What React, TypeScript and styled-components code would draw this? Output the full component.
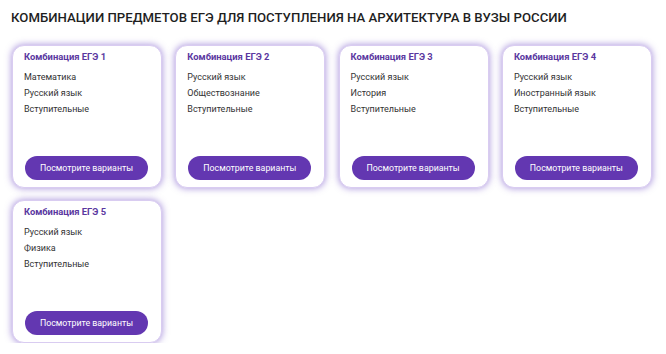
import React from "react";
import styled, { createGlobalStyle } from "styled-components";

const Global = createGlobalStyle`
  html, body { margin: 0; padding: 0; background: #ffffff; }
  body { font-family: Roboto, "Noto Sans", Arial, sans-serif; }
`;

const Page = styled.div`
  padding: 9px 14px 0 12px;
`;

const Heading = styled.h1`
  margin: 0 0 0 -1px;
  font-size: 13.2px;
  line-height: 18px;
  font-weight: 500;
  color: #1f1f1f;
  text-transform: uppercase;
  white-space: nowrap;
`;

const Grid = styled.div`
  display: grid;
  grid-template-columns: repeat(4, 150px);
  column-gap: 13.3px;
  row-gap: 12px;
  margin-top: 18px;
`;

const Card = styled.div`
  box-sizing: border-box;
  height: 143px;
  border-radius: 12px;
  background: #ffffff;
  border: 1px solid #d9ccf1;
  box-shadow: 0 0 6px 1px rgba(112, 76, 198, 0.5);
  padding: 4px 11px 7px 11px;
  display: flex;
  flex-direction: column;
`;

const CardTitle = styled.div`
  font-size: 9.4px;
  line-height: 14px;
  font-weight: 700;
  color: #5a379f;
`;

const List = styled.ul`
  list-style: none;
  margin: 5px 0 0 0;
  padding: 0;
`;

const Item = styled.li`
  font-size: 9px;
  line-height: 16px;
  color: #333333;
`;

const Button = styled.button`
  margin-top: auto;
  margin-left: 1px;
  width: 123px;
  height: 24px;
  border: none;
  border-radius: 12px;
  background: #6337b1;
  color: #ffffff;
  font-family: Roboto, "Noto Sans", Arial, sans-serif;
  font-size: 8.8px;
  font-weight: 400;
  padding: 0;
  cursor: pointer;
`;

const combos = [
  ["Математика", "Русский язык", "Вступительные"],
  ["Русский язык", "Обществознание", "Вступительные"],
  ["Русский язык", "История", "Вступительные"],
  ["Русский язык", "Иностранный язык", "Вступительные"],
  ["Русский язык", "Физика", "Вступительные"],
];

export default function App() {
  return (
    <>
      <Global />
      <Page>
        <Heading>Комбинации предметов ЕГЭ для поступления на Архитектура в вузы России</Heading>
        <Grid>
          {combos.map((items, i) => (
            <Card key={i}>
              <CardTitle>Комбинация ЕГЭ {i + 1}</CardTitle>
              <List>
                {items.map((it) => (
                  <Item key={it}>{it}</Item>
                ))}
              </List>
              <Button>Посмотрите варианты</Button>
            </Card>
          ))}
        </Grid>
      </Page>
    </>
  );
}
